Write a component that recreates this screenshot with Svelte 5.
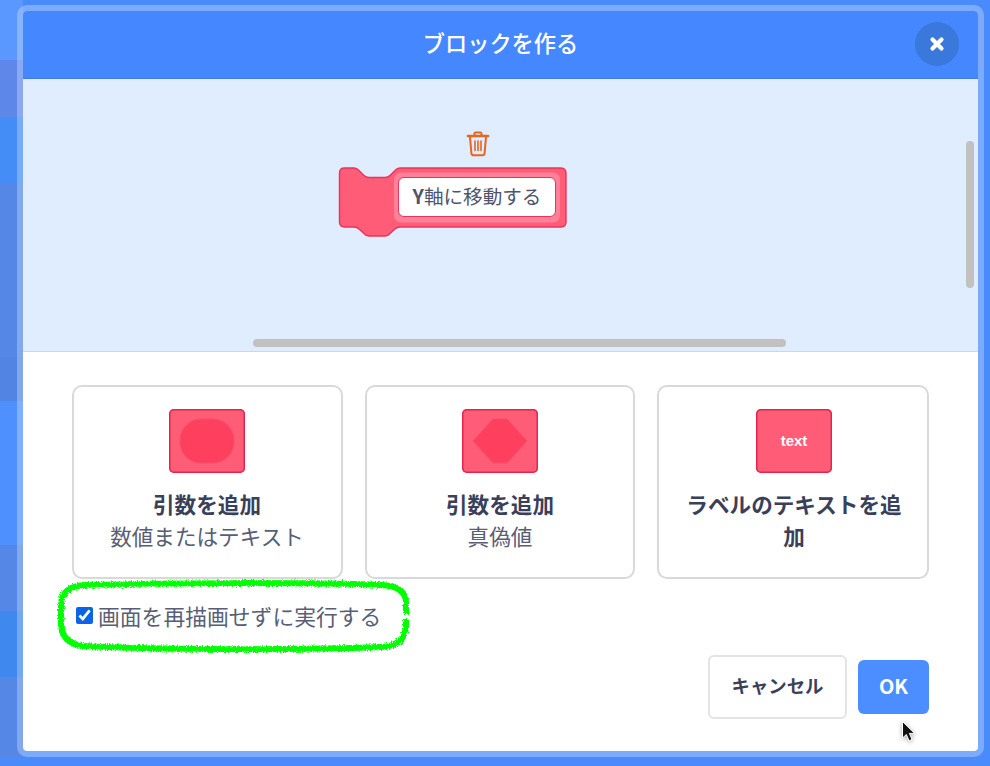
<script>
	const cards = [
		{ shape: 'round', title: '引数を追加', sub: '数値またはテキスト' },
		{ shape: 'diamond', title: '引数を追加', sub: '真偽値' },
		{ shape: 'text', title: 'ラベルのテキストを追加', sub: '' }
	];
	// what shows of the dimmed editor to the left of the dialog
	const bands = [
		{ top: 0, height: 60, color: '#5a98ff' },
		{ top: 60, height: 57, color: '#5d88ea' },
		{ top: 117, height: 66, color: '#448cf6' },
		{ top: 183, height: 174, color: '#5587e6' },
		{ top: 357, height: 44, color: '#5285e3' },
		{ top: 401, height: 144, color: '#4f90ff' },
		{ top: 545, height: 66, color: '#5587e6' },
		{ top: 611, height: 66, color: '#3f88ee' },
		{ top: 677, height: 80, color: '#5587e6' }
	];
	let warp = $state(true);
</script>

<div class="page">
	<div class="strip">
		{#each bands as band}
			<span class="band" style="top: {band.top}px; height: {band.height}px; background: {band.color}"></span>
		{/each}
	</div>

	<div class="frame">
		<header class="head">
			<span class="head-title">ブロックを作る</span>
			<button class="close" aria-label="閉じる">
				<svg width="16" height="16" viewBox="0 0 16 16">
					<path d="M3.5 3.5 L12.5 12.5 M12.5 3.5 L3.5 12.5" stroke="#fff" stroke-width="4.2" stroke-linecap="round" />
				</svg>
			</button>
		</header>

		<div class="preview">
			<div class="workspace">
				<svg class="trash" width="24" height="26" viewBox="0 0 24 26" fill="none" stroke="#e6661e" stroke-width="2" stroke-linejoin="round" stroke-linecap="round">
					<path d="M8.5 4 V2.6 Q8.5 1.5 9.6 1.5 H14.4 Q15.5 1.5 15.5 2.6 V4" />
					<path d="M2 5 H22" stroke-width="2.6" />
					<path d="M4 6 L5.4 22.4 Q5.6 24.3 7.5 24.3 H16.5 Q18.4 24.3 18.6 22.4 L20 6" />
					<path d="M9 10 V19.5 M12 10 V19.5 M15 10 V19.5" stroke-width="1.6" />
				</svg>
				<div class="block">
					<svg width="230" height="72" viewBox="0 0 230 72">
						<path
							d="M1.5 6 Q1.5 1 6.5 1 H16 Q19 1 21 3.5 L26 8.5 Q28 10.5 31 10.5 H47 Q50 10.5 52 8.5 L57 3.5 Q59 1 62 1 H222 Q228 1 228 6 V55 Q228 60 223 60 H62 Q59 60 57 62 L52 66.5 Q50 69 47 69 H31 Q28 69 26 66.5 L21 62 Q19 60 16 60 H6.5 Q1.5 60 1.5 55 Z"
							fill="#ff5c77"
							stroke="#e8345a"
							stroke-width="1.4"
						/>
						<rect x="56" y="5.5" width="166" height="50" rx="7" fill="#ff8097" />
					</svg>
					<div class="block-input"><b>Y</b>軸に移動する</div>
				</div>
			</div>
			<span class="scroll-y"></span>
			<span class="scroll-x"></span>
		</div>

		<div class="body">
			<div class="cards">
				{#each cards as card}
					<div class="card">
						<div class="swatch">
							{#if card.shape === 'round'}
								<svg width="76" height="64" viewBox="0 0 76 64">
									<rect x="11" y="10" width="54" height="44" rx="21" fill="#ff3f5e" stroke="#f2506c" />
								</svg>
							{:else if card.shape === 'diamond'}
								<svg width="76" height="64" viewBox="0 0 76 64">
									<path d="M11 32 L31 10 H45 L65 32 L45 54 H31 Z" fill="#ff3f5e" stroke="#f2506c" />
								</svg>
							{:else}
								<span class="swatch-text">text</span>
							{/if}
						</div>
						<div class="card-title">{card.title}</div>
						{#if card.sub}
							<div class="card-sub">{card.sub}</div>
						{/if}
					</div>
				{/each}
			</div>

			<label class="warp">
				<input type="checkbox" bind:checked={warp} />
				<span>画面を再描画せずに実行する</span>
				<svg class="scribble" width="365" height="80" viewBox="0 0 365 80" fill="none">
					<defs>
						<filter id="rough" x="-5%" y="-15%" width="110%" height="130%">
							<feTurbulence type="fractalNoise" baseFrequency="0.8" numOctaves="2" seed="4" />
							<feDisplacementMap in="SourceGraphic" scale="5" />
						</filter>
					</defs>
					<path
						d="M356 38 V27 Q356 10 331 9 C250 6 110 7 36 9 Q12 10 11 28 V48 Q12 68 34 70 C110 74 250 74 331 71 Q355 70 356 50 V43"
						stroke="#0f0"
						stroke-width="6"
						filter="url(#rough)"
					/>
				</svg>
			</label>

			<div class="footer">
				<button class="cancel">キャンセル</button>
				<button class="ok">OK</button>
			</div>
		</div>
	</div>

	<svg class="cursor" width="18" height="24" viewBox="0 0 18 24">
		<path d="M2.5 1.5 V18 L6.4 14.5 L9 20.8 L12 19.5 L9.4 13.4 H14.6 Z" fill="#111" stroke="#fff" stroke-width="1" stroke-linejoin="round" />
	</svg>
</div>

<style>
	:global(body) {
		margin: 0;
		background: #4d8cff;
	}

	.page {
		position: relative;
		width: 990px;
		height: 766px;
		overflow: hidden;
		padding: 5px 6px 9px 17px;
		box-sizing: border-box;
		background: #4a8bfb;
		font-family: 'Noto Sans CJK JP', 'Liberation Sans', sans-serif;
		color: #575e75;
	}

	.strip {
		position: absolute;
		left: 0;
		top: 0;
		width: 23px;
		height: 757px;
		overflow: hidden;
	}

	.band {
		position: absolute;
		left: 0;
		width: 23px;
	}

	.frame {
		position: relative;
		height: 100%;
		box-sizing: border-box;
		border: 6px solid rgba(255, 255, 255, 0.28);
		border-radius: 10px;
		background: #fff;
		background-clip: padding-box;
		display: flex;
		flex-direction: column;
	}

	.head {
		height: 68px;
		flex: none;
		display: flex;
		align-items: center;
		justify-content: center;
		position: relative;
		padding-bottom: 5px;
		background: #4487ff;
		border-radius: 4px 4px 0 0;
		border-bottom: 1px solid #3f7be6;
		box-sizing: border-box;
	}

	.head-title {
		color: #fff;
		font-size: 22.2px;
		font-weight: 500;
	}

	.close {
		position: absolute;
		right: 19px;
		top: 11px;
		width: 44px;
		height: 44px;
		padding: 0;
		border: none;
		border-radius: 50%;
		background: #3a78dc;
		display: flex;
		align-items: center;
		justify-content: center;
	}

	.preview {
		position: relative;
		height: 273px;
		flex: none;
		box-sizing: border-box;
		background: #e0ecff;
		border-bottom: 1px solid #d3d6dc;
	}

	.workspace {
		display: flex;
		flex-direction: column;
		align-items: flex-start;
		padding: 52px 0 0 315px;
	}

	.trash {
		margin: 0 0 10px 128px;
	}

	.block {
		position: relative;
		height: 72px;
	}

	.block svg {
		display: block;
	}

	.block-input {
		position: absolute;
		left: 60px;
		top: 10px;
		width: 158px;
		height: 40px;
		padding-bottom: 3px;
		box-sizing: border-box;
		border: 1px solid #e8345a;
		border-radius: 6px;
		background: #fff;
		display: flex;
		align-items: center;
		justify-content: center;
		font-size: 19.6px;
		color: #4f546c;
		white-space: nowrap;
	}

	.scroll-y {
		position: absolute;
		left: 943px;
		top: 62px;
		width: 8px;
		height: 147px;
		border-radius: 4px;
		background: #c1c1c1;
	}

	.scroll-x {
		position: absolute;
		left: 230px;
		top: 260px;
		width: 533px;
		height: 8px;
		border-radius: 4px;
		background: #c1c1c1;
	}

	.body {
		flex: 1;
		padding: 33px 49px 0;
		display: flex;
		flex-direction: column;
	}

	.cards {
		display: grid;
		grid-template-columns: 271px 270px 272px;
		column-gap: 22px;
	}

	.card {
		height: 194px;
		box-sizing: border-box;
		border: 2.5px solid #d9d9d9;
		border-radius: 10px;
		padding: 22px 18px 0;
		display: flex;
		flex-direction: column;
		align-items: center;
		text-align: center;
	}

	.card:first-child {
		padding-right: 19px;
	}

	.card:last-child {
		padding-left: 20px;
	}

	.swatch {
		width: 76px;
		height: 64px;
		flex: none;
		box-sizing: border-box;
		border-radius: 5px;
		background: #ff5c77;
		box-shadow: inset 0 0 0 1.5px #e5234f;
		display: flex;
		align-items: center;
		justify-content: center;
	}

	.swatch svg {
		display: block;
	}

	.swatch-text {
		color: #fff;
		font-family: 'Liberation Sans', sans-serif;
		font-size: 15px;
		font-weight: 700;
		margin-bottom: 2px;
	}

	.card-title {
		margin-top: 15px;
		font-size: 21.6px;
		line-height: 32px;
		font-weight: 700;
		color: #3a3f5a;
	}

	.card-sub {
		font-size: 21.6px;
		line-height: 32px;
		color: #575e75;
	}

	.warp {
		position: relative;
		margin: 23px 0 0 4px;
		height: 26px;
		display: flex;
		align-items: center;
		gap: 5px;
		font-size: 21.8px;
		white-space: nowrap;
	}

	.warp input {
		width: 17px;
		height: 17px;
		margin: 0;
		accent-color: #0b63e5;
	}

	.scribble {
		position: absolute;
		left: -26px;
		top: -26px;
		pointer-events: none;
	}

	.footer {
		margin-top: 27px;
		display: flex;
		justify-content: flex-end;
		align-items: center;
		gap: 11px;
	}

	.cancel,
	.ok {
		font-family: inherit;
		font-weight: 700;
		padding: 0 0 4px;
		border-radius: 6px;
	}

	.cancel {
		width: 139px;
		height: 64px;
		background: #fff;
		border: 2px solid #e4e4e4;
		font-size: 18.4px;
		color: #3a3f5a;
	}

	.ok {
		width: 71px;
		height: 54px;
		background: #4c8dff;
		border: none;
		font-size: 20px;
		color: #fff;
	}

	.cursor {
		position: absolute;
		left: 900px;
		top: 720px;
		filter: drop-shadow(0 1px 2px rgba(0, 0, 0, 0.35));
	}
</style>
